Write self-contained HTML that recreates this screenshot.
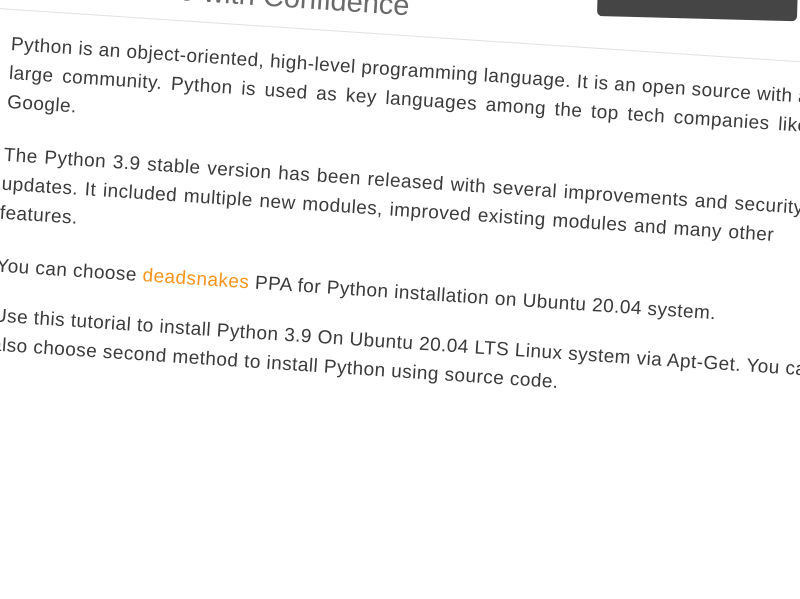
<!DOCTYPE html>
<html><head><meta charset="utf-8"><style>
html,body{margin:0;padding:0;}
body{width:800px;height:400px;overflow:hidden;background:#fff;position:relative;font-family:"Liberation Sans",sans-serif;}
.frame{position:absolute;left:12px;top:30px;width:1000px;height:500px;transform-origin:0 0;transform:rotate(3.8deg);}
.p{position:absolute;left:0;font-size:19px;letter-spacing:0.45px;line-height:29px;color:#3a3a3a;white-space:nowrap;}
.p div{height:29px;}
a{color:#f7941d;text-decoration:none;}
.h{position:absolute;left:-405px;width:800px;text-align:right;top:-66px;font-size:29px;color:#6a6a6a;white-space:nowrap;}
.line{position:absolute;left:-50px;width:1100px;top:-21px;height:1px;background:#e2e2e2;}
.btn{position:absolute;left:597px;top:-30px;width:200px;height:46px;background:#454545;border-radius:5px;transform-origin:0 100%;transform:rotate(1.5deg);}
</style></head><body>
<div class="btn"></div>
<div class="frame">
<div class="h">How to Install Python 3.9 with Confidence</div>
<div class="line"></div>
<div class="p" style="top:0">
<div>Python is an object-oriented, high-level programming language. It is an open source with a</div>
<div style="word-spacing:3px">large community. Python is used as key languages among the top tech companies like</div>
<div>Google.</div>
</div>
<div class="p" style="top:111px">
<div style="word-spacing:1px">The Python 3.9 stable version has been released with several improvements and security</div>
<div style="word-spacing:1px">updates. It included multiple new modules, improved existing modules and many other</div>
<div>features.</div>
</div>
<div class="p" style="top:222px">
<div>You can choose <a>deadsnakes</a> PPA for Python installation on Ubuntu 20.04 system.</div>
</div>
<div class="p" style="top:272px">
<div>Use this tutorial to install Python 3.9 On Ubuntu 20.04 LTS Linux system via Apt-Get. You can</div>
<div>also choose second method to install Python using source code.</div>
</div>
</div>
</body></html>
